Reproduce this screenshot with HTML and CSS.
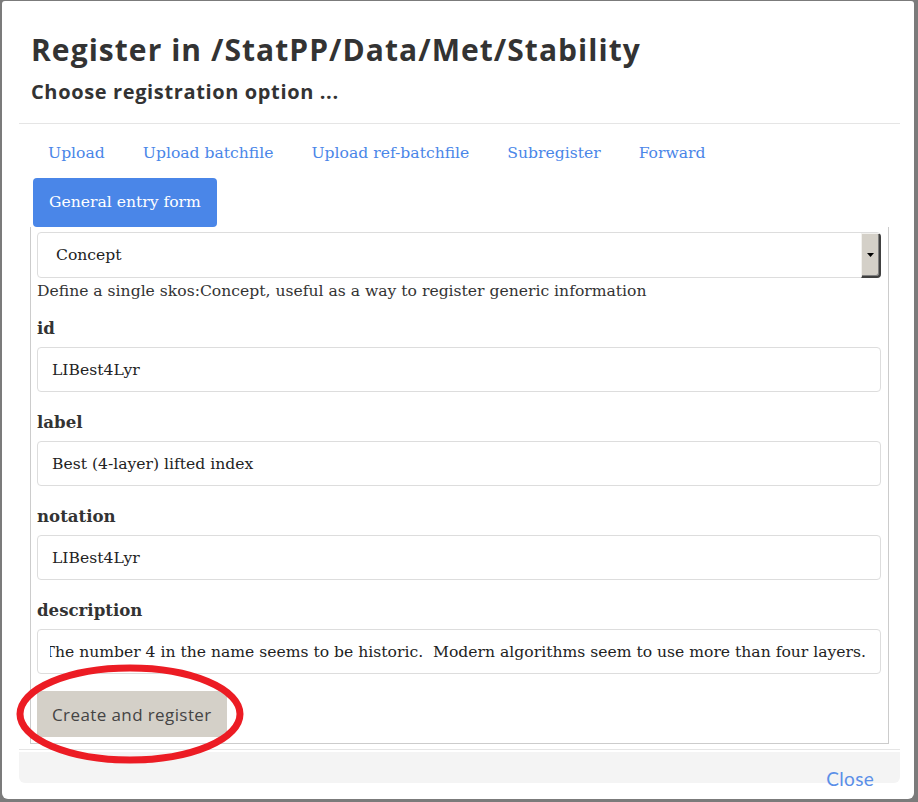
FILE: index.html
```html
<!DOCTYPE html>
<html>
<head>
<meta charset="utf-8">
<link rel="stylesheet" href="styles.css">
</head>
<body>
<div class="modal">
  <div class="modal-header">
    <h1>Register in /StatPP/Data/Met/Stability</h1>
    <h2>Choose registration option ...</h2>
  </div>
  <div class="modal-body">
    <ul class="tabs">
      <li><a>Upload</a></li>
      <li><a>Upload batchfile</a></li>
      <li><a>Upload ref-batchfile</a></li>
      <li><a>Subregister</a></li>
      <li><a>Forward</a></li>
      <li class="active"><a>General entry form</a></li>
    </ul>
    <div class="panel">
      <div class="select">
        <span class="select-value">Concept</span>
        <span class="drop"><svg width="7" height="4" viewBox="0 0 7 4"><path d="M0 0H7L3.5 4Z" fill="#000"/></svg></span>
      </div>
      <p class="hint">Define a single skos:Concept, useful as a way to register generic information</p>
      <div class="group first">
        <label>id</label>
        <div class="input">LIBest4Lyr</div>
      </div>
      <div class="group">
        <label>label</label>
        <div class="input">Best (4-layer) lifted index</div>
      </div>
      <div class="group">
        <label>notation</label>
        <div class="input">LIBest4Lyr</div>
      </div>
      <div class="group">
        <label>description</label>
        <div class="input"><div class="clip"><span class="scrolled">The number 4 in the name seems to be historic.  Modern algorithms seem to use more than four layers.</span></div></div>
      </div>
      <div class="actions">
        <button class="btn">Create and register</button>
        <svg class="circle" width="240" height="112" viewBox="0 0 240 112"><ellipse cx="116" cy="54" rx="110" ry="46" fill="none" stroke="#ec1c24" stroke-width="7"/></svg>
      </div>
    </div>
  </div>
  <div class="sep"></div>
  <div class="modal-footer"><a class="close">Close</a></div>
</div>
</body>
</html>
```

FILE: styles.css
```css
html, body {
  margin: 0;
  padding: 0;
  background: #7b7b7b;
  height: 802px;
  overflow: hidden;
}
.modal {
  box-sizing: border-box;
  width: 912px;
  height: 798px;
  margin: 1px 0 0 2px;
  padding: 0 14px 0 17px;
  background: #fff;
  border-radius: 3px 3px 6px 6px;
}
.modal-header {
  padding: 31px 12px 19px;
  border-bottom: 1px solid #e5e5e5;
}
.modal-header h1 {
  margin: 0;
  font-family: "Open Sans", Lato, sans-serif;
  font-weight: 700;
  font-size: 30px;
  line-height: 36px;
  letter-spacing: 1.05px;
  color: #333;
}
.modal-header h2 {
  margin: 12px 0 0;
  font-family: "Open Sans", Lato, sans-serif;
  font-weight: 700;
  font-size: 20px;
  line-height: 24px;
  letter-spacing: 0.63px;
  color: #333;
}
.modal-body {
  padding: 5px 11px 5px 11px;
  border-bottom: 1px solid #e5e5e5;
}
.tabs {
  list-style: none;
  margin: 0 0 0 3px;
  padding: 0;
  display: flex;
  flex-wrap: wrap;
  font-family: "DejaVu Serif", serif;
  font-size: 15.6px;
}
.tabs li {
  margin-right: 8px;
}
.tabs a {
  display: block;
  height: 49px;
  line-height: 49px;
  padding: 0 15px;
  color: #4a86e8;
  border-radius: 4px;
}
.tabs li.active a {
  background: #4a86e8;
  color: #fff;
  padding: 0 16px;
}
.panel {
  border: 1px solid #ccc;
  border-top: none;
  padding: 5px 7px 6px 6px;
  font-family: "DejaVu Serif", serif;
  font-size: 15.6px;
  color: #333;
}
.select {
  box-sizing: border-box;
  height: 46px;
  border: 1px solid #ddd;
  border-radius: 4px;
  display: flex;
  align-items: center;
  padding-left: 18px;
  color: #222;
}
.select-value {
  flex: 1;
}
.drop {
  box-sizing: border-box;
  width: 20px;
  height: 45px;
  margin-right: -1px;
  margin-top: -1px;
  margin-bottom: -1px;
  background: #d4d0c8;
  border-top: 1px solid #f2f1ee;
  border-left: 1px solid #f2f1ee;
  border-right: 2px solid #404040;
  border-bottom: 2px solid #404040;
  box-shadow: inset -1px -1px 0 #808080;
  border-radius: 0 4px 4px 0;
  display: flex;
  align-items: center;
  justify-content: center;
}
.hint {
  margin: 2px 0 0;
  line-height: 22px;
}
.group {
  margin-top: 19px;
}
.group.first {
  margin-top: 15px;
}
.group label {
  display: block;
  font-weight: 700;
  font-size: 16.6px;
  line-height: 22px;
  margin-bottom: 8px;
}
.input {
  box-sizing: border-box;
  height: 45px;
  border: 1px solid #ddd;
  border-radius: 4px;
  padding: 0 14px;
  display: flex;
  align-items: center;
  white-space: pre;
  color: #222;
}
.clip {
  flex: 1;
  overflow: hidden;
  display: flex;
  justify-content: flex-end;
  margin-left: -2px;
}
.scrolled {
  flex: none;
}
.actions {
  position: relative;
  margin-top: 17px;
  height: 46px;
}
.btn {
  height: 46px;
  padding: 0 15px;
  border: none;
  background: #d4d0c8;
  color: #444;
  font-family: "Open Sans", Lato, sans-serif;
  font-size: 17px;
  letter-spacing: 0.4px;
}
.circle {
  position: absolute;
  left: -23px;
  top: -31px;
}
.sep {
  height: 2px;
}
.modal-footer {
  box-sizing: border-box;
  height: 31px;
  background: #f4f4f4;
  border-radius: 0 0 6px 6px;
  display: flex;
  justify-content: flex-end;
  align-items: flex-start;
  padding: 16px 26px 0 0;
}
.close {
  font-family: Lato, "Open Sans", sans-serif;
  font-size: 19px;
  line-height: 22px;
  color: #5b8fe8;
  letter-spacing: 0.3px;
}
```
